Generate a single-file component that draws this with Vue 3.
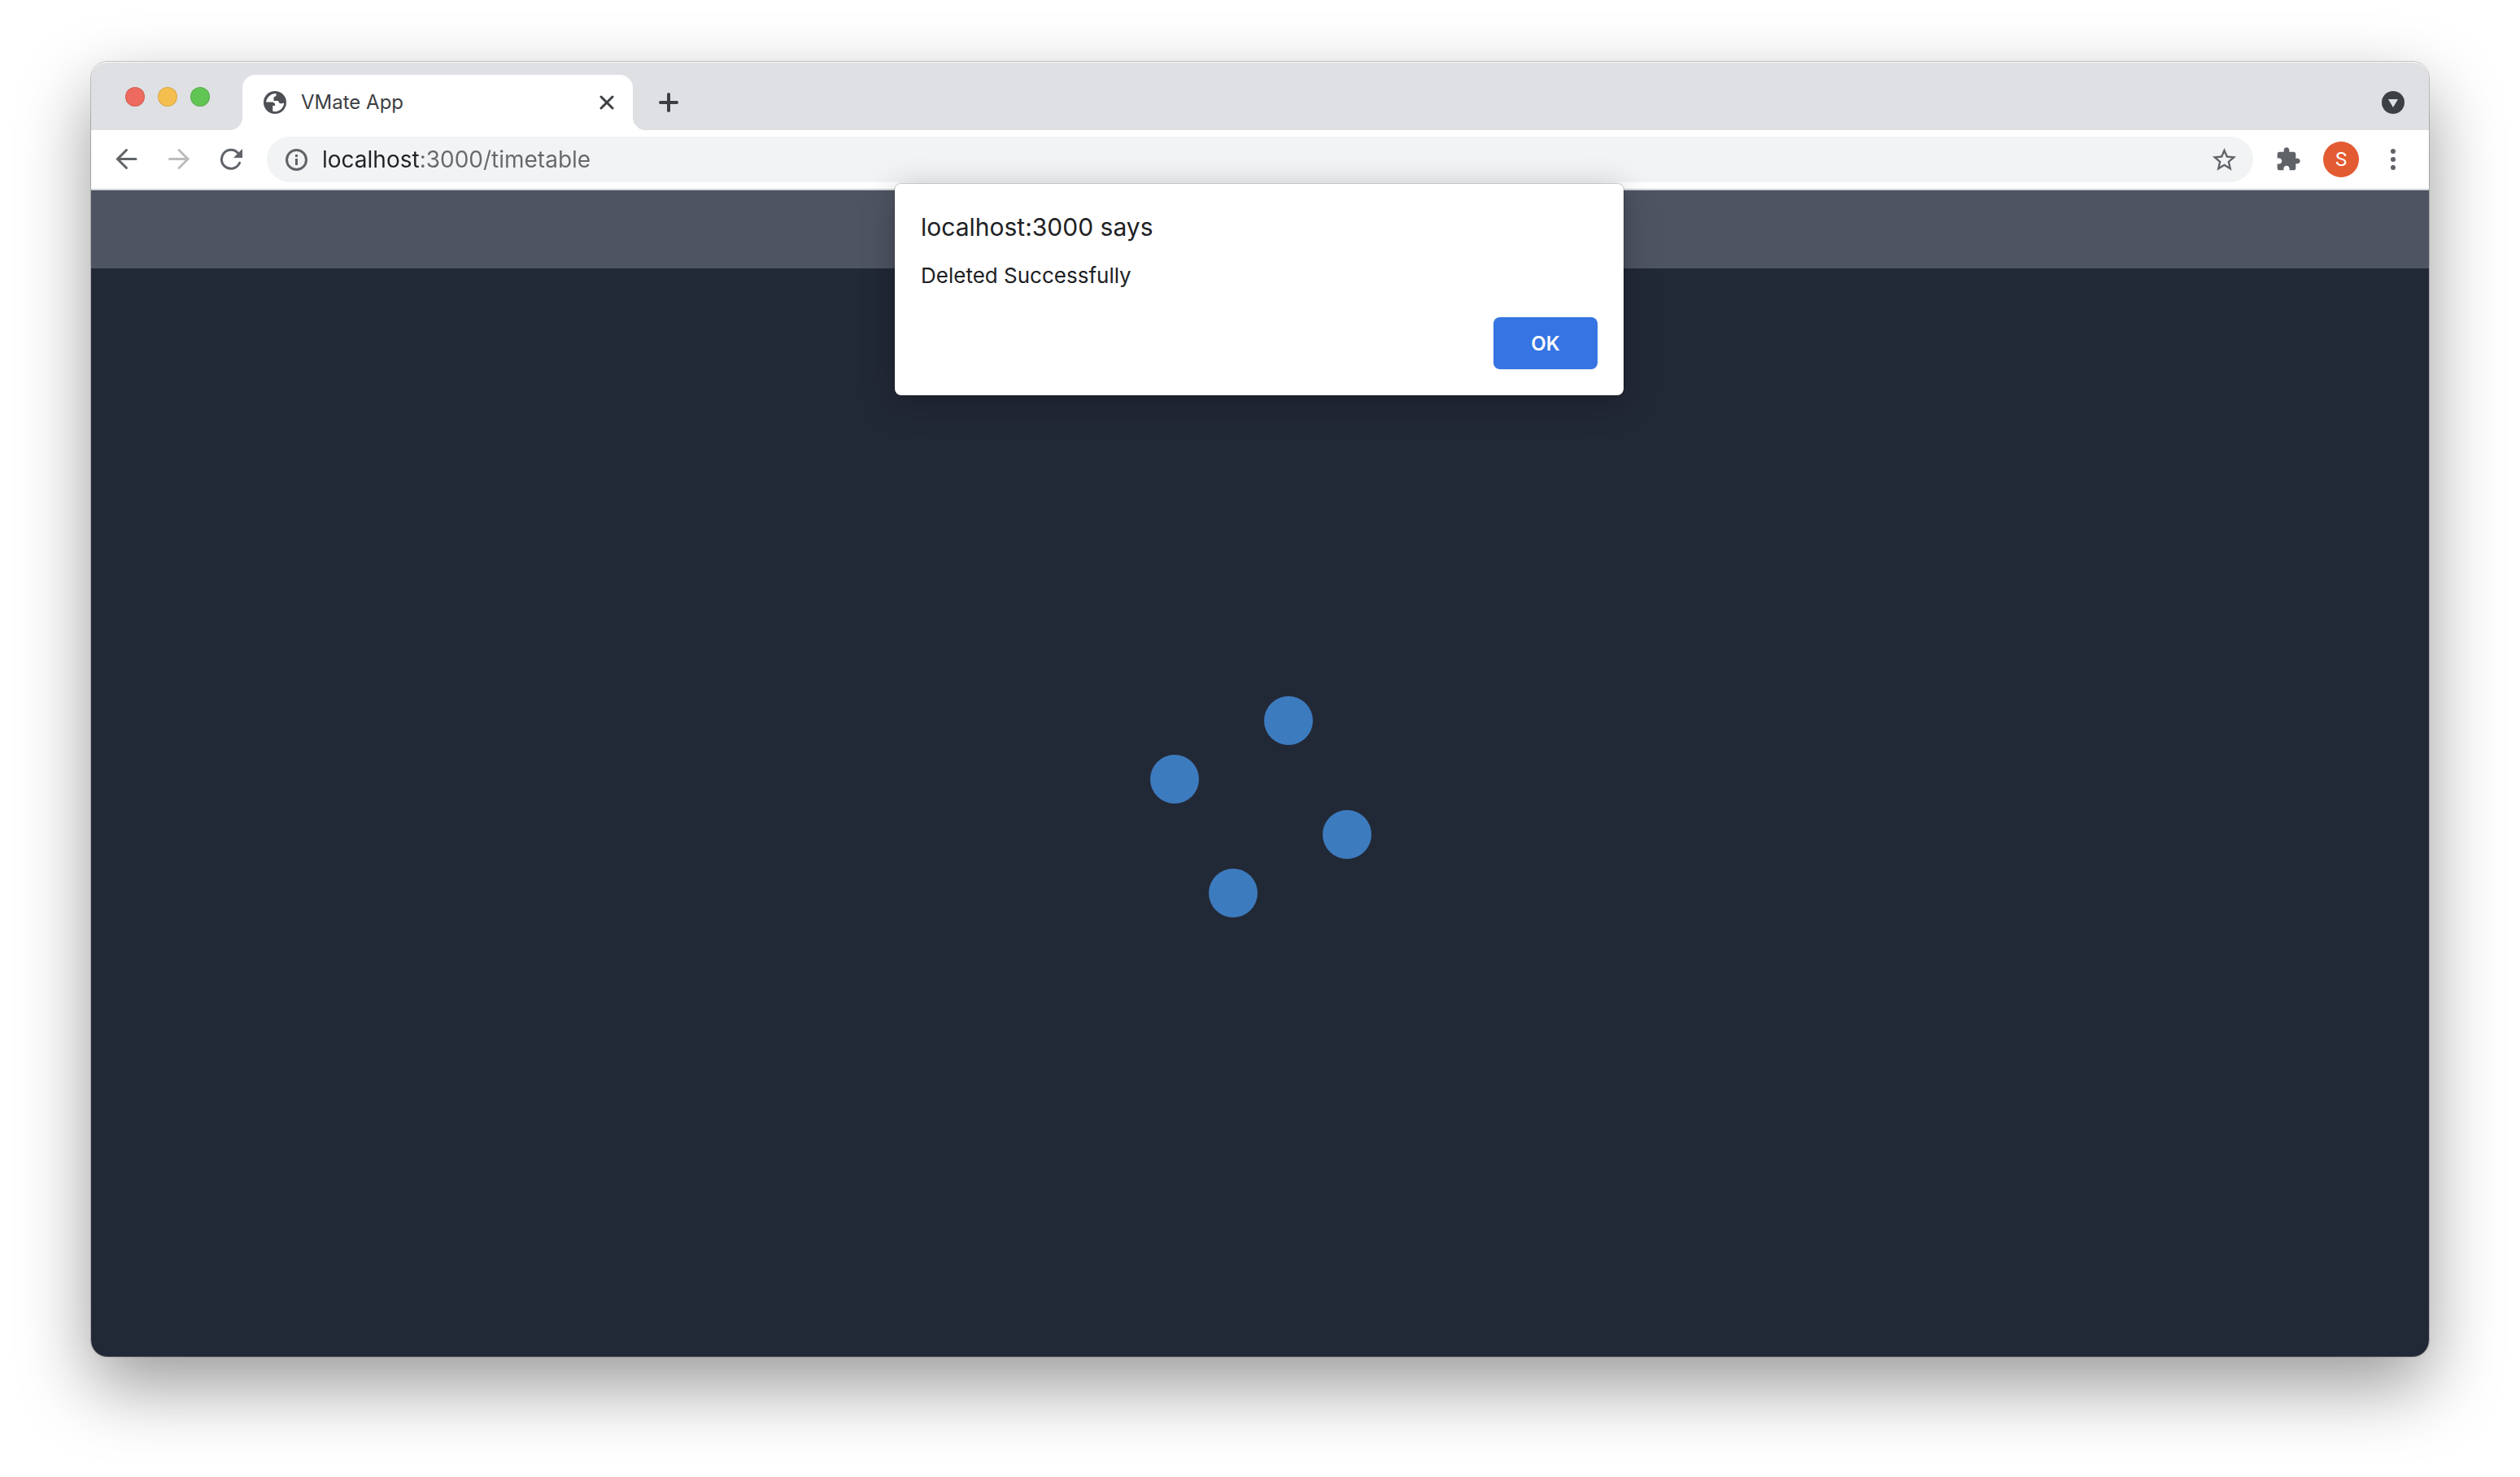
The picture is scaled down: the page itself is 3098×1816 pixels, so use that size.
<script setup>
import { ref } from 'vue'

const url = ref('localhost:3000/timetable')
const alertOpen = ref(true)
const dots = [
  { x: 170, y: 30 },
  { x: 30, y: 102 },
  { x: 242, y: 170 },
  { x: 102, y: 242 },
]
</script>

<template>
  <div class="desktop">
    <div class="window">
      <header class="tabstrip">
        <div class="lights">
          <button class="light red" aria-label="Close window"></button>
          <button class="light yellow" aria-label="Minimise window"></button>
          <button class="light green" aria-label="Zoom window"></button>
        </div>
        <div class="tab">
          <svg class="favicon" viewBox="0 0 28 28" aria-hidden="true">
            <circle cx="14" cy="14" r="14" fill="#4d5156" />
            <path
              fill="#fff"
              d="M15.500 3C9.500 2.600 4.200 7.200 3 13.500h7.500c2.200 0 3.600 1.400 3.600 3.200v1.300h-2.800v6.800c1 .3 1.800.4 2.700.4 6.200 0 11-4.900 11.200-10.600-1 .5-2 .7-3.200.7-2.200 0-3.800-1.400-3.800-3.400h-5.700V8.700c0-1.600 1-2.500 3-2.500z"
            />
          </svg>
          <span class="tab-title">VMate App</span>
          <button class="icon-btn" aria-label="Close tab">
            <svg width="18" height="18" viewBox="0 0 18 18"><path d="M2 2l14 14M16 2L2 16" stroke="#3c4043" stroke-width="3" stroke-linecap="round" /></svg>
          </button>
        </div>
        <button class="icon-btn new-tab" aria-label="New tab">
          <svg width="24" height="24" viewBox="0 0 24 24"><path d="M12 2v20M2 12h20" stroke="#3c4043" stroke-width="4" stroke-linecap="round" /></svg>
        </button>
        <button class="icon-btn tab-search" aria-label="Search tabs">
          <svg width="28" height="28" viewBox="0 0 28 28"><circle cx="14" cy="14" r="14" fill="#3c4043" /><path d="M8 10h12l-6 10z" fill="#dee1e6" /></svg>
        </button>
      </header>

      <nav class="toolbar" aria-label="Browser">
        <div class="nav-buttons">
          <button class="icon-btn" aria-label="Back">
            <svg width="28" height="28" viewBox="0 0 28 28" fill="none" stroke="#5f6368" stroke-width="3" stroke-linecap="round"><path d="M25 13.500H2.500M13.500 2.500l-11 11 11 11" /></svg>
          </button>
          <button class="icon-btn" aria-label="Forward" disabled>
            <svg width="28" height="28" viewBox="0 0 28 28" fill="none" stroke="#babcbe" stroke-width="3" stroke-linecap="round"><path d="M2.500 13.500H25M14 2.500l11 11-11 11" /></svg>
          </button>
          <button class="icon-btn" aria-label="Reload">
            <svg width="28" height="28" viewBox="0 0 28 28"><path d="M24.500 18.200A11.500 11.500 0 1 1 22.500 6.200" fill="none" stroke="#5f6368" stroke-width="3" stroke-linecap="round" /><path d="M28 1v11H17z" fill="#5f6368" /></svg>
          </button>
        </div>
        <div class="omnibox">
          <svg width="28" height="28" viewBox="0 0 28 28" aria-hidden="true"><circle cx="14.500" cy="14.500" r="12" fill="none" stroke="#5f6368" stroke-width="3" /><path d="M13 8h3v3h-3zM13 13h3v8h-3z" fill="#5f6368" /></svg>
          <input v-model="url" class="url" type="text" aria-label="Address" />
          <button class="icon-btn" aria-label="Bookmark this page">
            <svg width="35" height="35" viewBox="0 0 24 24"><path fill="#5f6368" d="M22 9.240l-7.190-.62L12 2 9.190 8.630 2 9.240l5.460 4.730L5.820 21 12 17.270 18.180 21l-1.630-7.030L22 9.240zM12 15.400l-3.760 2.270 1-4.280-3.320-2.880 4.380-.38L12 6.100l1.710 4.040 4.380.38-3.320 2.880 1 4.280L12 15.400z" /></svg>
          </button>
        </div>
        <div class="actions">
          <button class="icon-btn" aria-label="Extensions">
            <svg width="32" height="32" viewBox="0 0 24 24"><path fill="#5f6368" d="M20.500 11H19V7c0-1.100-.9-2-2-2h-4V3.500C13 2.120 11.880 1 10.500 1S8 2.120 8 3.500V5H4c-1.100 0-1.990.9-1.990 2v3.800H3.500c1.490 0 2.700 1.210 2.700 2.700s-1.210 2.700-2.700 2.700H2V20c0 1.100.9 2 2 2h3.800v-1.500c0-1.490 1.210-2.700 2.700-2.700 1.490 0 2.700 1.210 2.700 2.700V22H17c1.100 0 2-.9 2-2v-4h1.500c1.380 0 2.500-1.120 2.500-2.500S21.880 11 20.500 11z" /></svg>
          </button>
          <button class="avatar" aria-label="Profile S">S</button>
          <button class="icon-btn menu" aria-label="Menu">
            <svg width="28" height="28" viewBox="0 0 28 28" fill="#5f6368"><circle cx="14" cy="4" r="3" /><circle cx="14" cy="14" r="3" /><circle cx="14" cy="24" r="3" /></svg>
          </button>
        </div>
      </nav>

      <main class="page">
        <div class="page-bar"></div>
        <div class="loading">
          <svg width="272" height="272" viewBox="0 0 272 272" role="img" aria-label="Loading">
            <circle v-for="dot in dots" :key="dot.x" :cx="dot.x" :cy="dot.y" r="30" fill="#3d7bbf" />
          </svg>
        </div>
      </main>

      <section v-if="alertOpen" class="alert" role="alertdialog" aria-labelledby="alert-title" aria-describedby="alert-text">
        <h1 id="alert-title">localhost:3000 says</h1>
        <p id="alert-text">Deleted Successfully</p>
        <button class="ok" @click="alertOpen = false">OK</button>
      </section>
    </div>
  </div>
</template>

<style>
body {
  margin: 0;
  background: #fff;
}
</style>

<style scoped>
.desktop {
  box-sizing: border-box;
  min-height: 100vh;
  padding: 76px 112px 148px;
  display: flex;
  flex-direction: column;
  overflow: hidden;
  font-family: Inter, "Liberation Sans", sans-serif;
  color: #202124;
}
.window {
  position: relative;
  flex: 1;
  display: flex;
  flex-direction: column;
  border-radius: 20px;
  background: #fff;
  box-shadow: 0 0 0 1px rgba(0, 0, 0, 0.2), 0 36px 88px rgba(0, 0, 0, 0.4);
}
button {
  border: 0;
  padding: 0;
  background: none;
  font-family: inherit;
}
svg {
  display: block;
}
.icon-btn {
  display: flex;
  align-items: center;
  justify-content: center;
}

.tabstrip {
  display: flex;
  align-items: flex-end;
  height: 84px;
  background: #dee0e4;
  border-radius: 20px 20px 0 0;
  box-shadow: inset 0 2px 0 -1px rgba(255, 255, 255, 0.8);
}
.lights {
  display: flex;
  align-items: center;
  gap: 16px;
  width: 144px;
  height: 82px;
  padding-left: 42px;
}
.light {
  width: 24px;
  height: 24px;
  border-radius: 50%;
  box-shadow: inset 0 0 0 1px rgba(0, 0, 0, 0.12);
}
.red {
  background: #ed6a5e;
}
.yellow {
  background: #f5bf4f;
}
.green {
  background: #61c554;
}
.tab {
  position: relative;
  box-sizing: border-box;
  width: 480px;
  height: 68px;
  padding: 0 23px 0 26px;
  display: flex;
  align-items: center;
  border-radius: 16px 16px 0 0;
  background: #fff;
}
.tab::before,
.tab::after {
  content: "";
  position: absolute;
  bottom: 0;
  width: 16px;
  height: 16px;
}
.tab::before {
  right: 100%;
  background: radial-gradient(circle at 0 0, transparent 16px, #fff 16px);
}
.tab::after {
  left: 100%;
  background: radial-gradient(circle at 100% 0, transparent 16px, #fff 16px);
}
.favicon {
  width: 28px;
  height: 28px;
}
.tab-title {
  flex: 1;
  margin-left: 18px;
  font-size: 24px;
  line-height: 32px;
  color: #3c4043;
}
.new-tab {
  height: 68px;
  margin-left: 32px;
}
.tab-search {
  height: 68px;
  margin-left: auto;
  margin-right: 30px;
}

.toolbar {
  display: flex;
  align-items: center;
  height: 72px;
  border-bottom: 2px solid #d5d9dd;
  background: #fff;
}
.nav-buttons {
  display: flex;
  gap: 36px;
  padding: 0 30px;
}
.omnibox {
  flex: 1;
  display: flex;
  align-items: center;
  height: 56px;
  padding: 0 18px 0 22px;
  border-radius: 28px;
  background: #f1f3f4;
}
.url {
  flex: 1;
  height: 40px;
  margin-left: 18px;
  padding: 0;
  border: 0;
  outline: 0;
  font-family: inherit;
  font-size: 28px;
  color: transparent;
  background: linear-gradient(90deg, #202124 120px, #66696c 120px);
  background-clip: text;
}
.actions {
  display: flex;
  align-items: center;
  gap: 27px;
  padding: 0 30px 0 27px;
}
.menu {
  margin-left: 1px;
}
.avatar {
  width: 44px;
  height: 44px;
  border-radius: 50%;
  background: #e35b32;
  color: #fff;
  font-family: Roboto, sans-serif;
  font-size: 24px;
}

.page {
  flex: 1;
  display: flex;
  flex-direction: column;
  border-radius: 0 0 20px 20px;
  background: #222936;
}
.page-bar {
  height: 96px;
  background: #4e5461;
}
.loading {
  flex: 1;
  display: flex;
  align-items: center;
  justify-content: center;
  padding: 0 0 14px 2px;
}

.alert {
  position: absolute;
  top: 150px;
  left: 0;
  right: 2px;
  margin: 0 auto;
  box-sizing: border-box;
  width: 896px;
  padding: 32px;
  display: flex;
  flex-direction: column;
  border-radius: 8px;
  background: #fff;
  box-shadow: 0 0 1px 1px rgba(0, 0, 0, 0.2), 0 8px 40px rgba(0, 0, 0, 0.25);
}
.alert h1 {
  margin: 0;
  font-size: 30px;
  line-height: 42px;
  font-weight: 400;
}
.alert p {
  margin: 21px 0 33px;
  font-size: 26px;
  line-height: 36px;
}
.ok {
  align-self: flex-end;
  width: 128px;
  height: 64px;
  border-radius: 8px;
  background: #3574e2;
  color: #fff;
  font-size: 24px;
  font-weight: 600;
}
</style>
